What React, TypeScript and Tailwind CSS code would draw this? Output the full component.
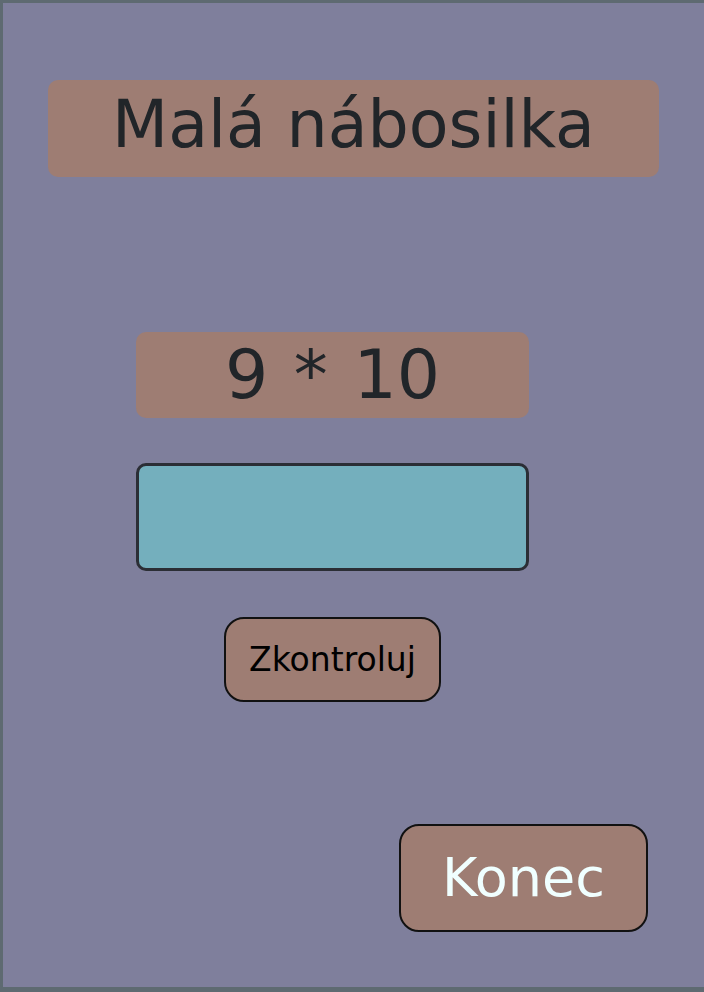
import { useState } from 'react';

const font = { fontFamily: '"DejaVu Sans", Verdana, sans-serif' };

export default function App() {
  const [answer, setAnswer] = useState('');

  return (
    <div
      className="h-[992px] w-full overflow-hidden border-t-[3px] border-l-[3px] border-b-[5px] border-[#5e6a71] bg-[#7f7f9c]"
      style={font}
    >
      <div className="flex w-[659px] flex-col items-center">
        {/* Title */}
        <div className="mt-[77px] ml-[45px] flex h-[97px] w-[611px] items-center justify-center self-start rounded-[10px] bg-[#9e7d73] pb-[8px]">
          <h1 className="text-[65px] leading-none text-[#212529]">Malá nábosilka</h1>
        </div>

        {/* Example */}
        <div className="mt-[155px] flex h-[86px] w-[393px] items-center justify-center rounded-[10px] bg-[#9e7d73] pb-[1px]">
          <span className="text-[68px] leading-none text-[#212529] [word-spacing:4px]">9 * 10</span>
        </div>

        {/* Answer input */}
        <input
          value={answer}
          onChange={(e) => setAnswer(e.target.value)}
          className="mt-[45px] h-[108px] w-[393px] rounded-[10px] border-[3px] border-[#2b2e35] bg-[#74afbd] px-3 text-center text-[48px] text-[#212529] outline-none"
        />

        <button className="mt-[46px] flex h-[85px] w-[217px] items-center justify-center rounded-[20px] border-2 border-[#111] bg-[#9e7d73] text-[33px] leading-none text-black">
          Zkontroluj
        </button>

        <button className="mt-[122px] ml-[396px] flex h-[108px] w-[249px] items-center justify-center self-start rounded-[20px] border-2 border-[#111] bg-[#9e7d73] text-[54px] leading-none text-[#f0ffff]">
          Konec
        </button>
      </div>
    </div>
  );
}
